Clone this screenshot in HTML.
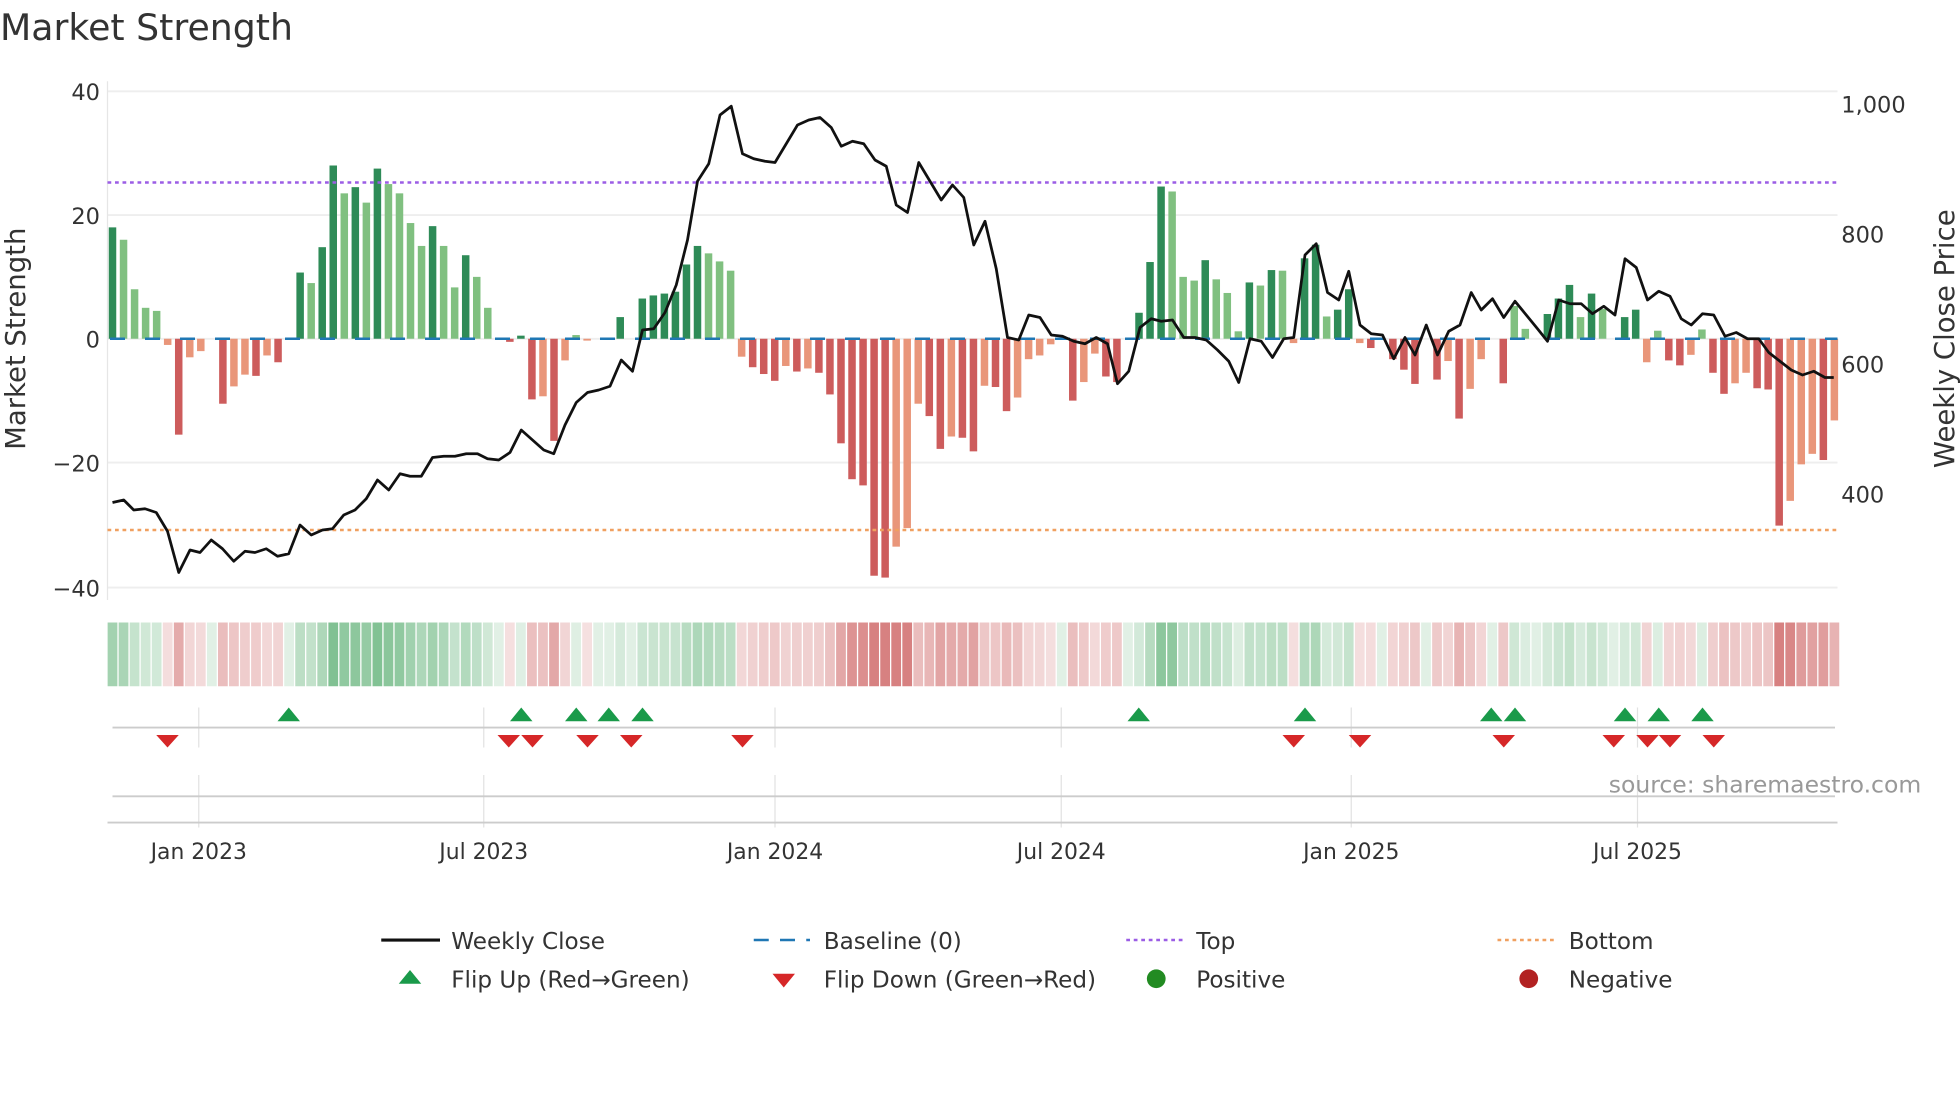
<!DOCTYPE html>
<html><head><meta charset="utf-8"><style>
html,body{margin:0;padding:0;background:#fff;width:1960px;height:1102px;overflow:hidden}
svg text{font-family:"DejaVu Sans","Liberation Sans",sans-serif;fill:#333}
</style></head><body>
<svg id="s" width="1960" height="1102" viewBox="0 0 1568 881.6" xmlns="http://www.w3.org/2000/svg">
<text x="0" y="32" font-size="29">Market Strength</text>
<g id="grid"></g>
<line x1="86" y1="65" x2="86" y2="480" stroke="#e6e6e6" stroke-width="1"/>
<g font-size="18" text-anchor="end">
<text x="80" y="80">40</text><text x="80" y="179">20</text><text x="80" y="278">0</text><text x="80" y="377">−20</text><text x="80" y="477">−40</text>
</g>
<g font-size="18">
<text x="1473" y="90">1,000</text><text x="1473" y="194">800</text><text x="1473" y="298">600</text><text x="1473" y="402">400</text>
</g>
<text transform="translate(20,271) rotate(-90)" font-size="22" text-anchor="middle">Market Strength</text>
<text transform="translate(1563,271) rotate(-90)" font-size="22" text-anchor="middle">Weekly Close Price</text>
<g id="bars"></g>
<line x1="86" y1="146" x2="1470" y2="146" stroke="#9b5de5" stroke-width="2" stroke-dasharray="3 3"/>
<line x1="86" y1="424" x2="1470" y2="424" stroke="#f0a060" stroke-width="2" stroke-dasharray="3 3"/>
<g id="line"></g>
<g id="heat"></g>
<g id="mk"></g>
<line x1="90" y1="582" x2="1468" y2="582" stroke="#ccc" stroke-width="1.5"/>
<line x1="90" y1="637" x2="1468" y2="637" stroke="#ccc" stroke-width="1.5"/>
<line x1="86" y1="658" x2="1470" y2="658" stroke="#ccc" stroke-width="1.5"/>
<text x="1537" y="634" font-size="18.8" text-anchor="end" style="fill:#999">source: sharemaestro.com</text>
<g font-size="17.5" text-anchor="middle">
<text x="159" y="687">Jan 2023</text><text x="387" y="687">Jul 2023</text><text x="620" y="687">Jan 2024</text><text x="849" y="687">Jul 2024</text><text x="1081" y="687">Jan 2025</text><text x="1310" y="687">Jul 2025</text>
</g>
<g font-size="18.5">
<line x1="305" y1="752" x2="352" y2="752" stroke="#111" stroke-width="2.5"/>
<text x="361" y="759">Weekly Close</text>
<line x1="603" y1="752" x2="648" y2="752" stroke="#1f77b4" stroke-width="2" stroke-dasharray="12 9"/>
<text x="659" y="759">Baseline (0)</text>
<line x1="901" y1="752" x2="946" y2="752" stroke="#9b5de5" stroke-width="2" stroke-dasharray="3 3"/>
<text x="957" y="759">Top</text>
<line x1="1198" y1="752" x2="1244" y2="752" stroke="#f0a060" stroke-width="2" stroke-dasharray="3 3"/>
<text x="1255" y="759">Bottom</text>
<polygon points="319,787 337,787 328,776" fill="#1a9a4a"/>
<text x="361" y="790">Flip Up (Red→Green)</text>
<polygon points="618,779 636,779 627,790" fill="#d62728"/>
<text x="659" y="790">Flip Down (Green→Red)</text>
<circle cx="925" cy="783" r="7.5" fill="#228b22"/>
<text x="957" y="790">Positive</text>
<circle cx="1223" cy="783" r="7.5" fill="#b22222"/>
<text x="1255" y="790">Negative</text>
</g>
</svg>
<script>
var NS="http://www.w3.org/2000/svg";
function el(p,t,a){var e=document.createElementNS(NS,t);for(var k in a)e.setAttribute(k,a[k]);document.getElementById(p).appendChild(e);return e;}
var v=[18,16,8,5,4.5,-1,-15.5,-3,-2,0,-10.5,-7.7,-5.8,-6,-2.7,-3.8,0,10.7,9,14.8,28,23.5,24.5,22,27.5,25,23.5,18.7,15,18.2,15,8.3,13.5,10,5,0,-0.5,0.5,-9.8,-9.3,-16.5,-3.5,0.6,-0.3,0,0,3.5,0,6.5,7,7.3,7.6,12,15,13.8,12.5,11,-2.9,-4.6,-5.7,-6.8,-4.4,-5.3,-4.8,-5.5,-9,-16.9,-22.7,-23.7,-38.3,-38.6,-33.6,-30.6,-10.5,-12.5,-17.8,-15.8,-16,-18.2,
-7.6,-7.8,-11.7,-9.5,-3.3,-2.7,-0.9,0,-10,-7,-2.4,-6.1,-7,0,4.2,12.4,24.6,23.8,10,9.4,12.7,9.6,7.4,1.2,9.1,8.6,11.1,11,-0.7,13,15.2,3.6,4.7,8,-0.7,-1.5,0,-3.3,-5,-7.3,0,-6.6,-3.6,-12.9,-8.1,-3.3,0,-7.2,5.3,1.6,0,4,6.5,8.7,3.5,7.3,4.8,0,3.5,4.7,-3.8,1.3,-3.5,-4.3,-2.6,1.5,-5.5,-8.9,-7.2,-5.5,-8,-8.2,-30.2,-26.2,-20.3,-18.6,-19.6,-13.2];
var n=v.length,x0=90,dx=(1467.5-90)/(n-1);
[73,172,271,370,470].forEach(function(y){el("grid","line",{x1:86,y1:y,x2:1470,y2:y,stroke:"#eeeeee","stroke-width":1.5});});
[159,387,620,849,1081,1310].forEach(function(x){el("grid","line",{x1:x,y1:566,x2:x,y2:598,stroke:"#e2e2e2","stroke-width":1});el("grid","line",{x1:x,y1:620,x2:x,y2:662,stroke:"#e2e2e2","stroke-width":1});});
var prev=0;
for(var i=0;i<n;i++){
 var x=x0+i*dx,val=v[i],inc=Math.abs(val)>=Math.abs(prev);prev=val;
 var c=val>=0?(inc?"#2e8b57":"#80c080"):(inc?"#cd5c5c":"#e9967a");
 if(Math.abs(val)>0.05){var h=Math.abs(val)*4.95;el("bars","rect",{x:x-3,y:val>0?271-h:271,width:6,height:h,fill:c});}
 var a=Math.min(Math.abs(val)/28,1),r,g,b,t=0.17+0.55*a;
 if(val>=0){r=255+(80-255)*t;g=255+(170-255)*t;b=255+(105-255)*t;}
 else{r=255+(200-255)*t;g=255+(80-255)*t;b=255+(80-255)*t;}
 el("heat","rect",{x:x-3.9,y:498,width:7.8,height:51,fill:"rgb("+(r|0)+","+(g|0)+","+(b|0)+")"});
}
el("bars","line",{x1:88,y1:271,x2:1470,y2:271,stroke:"#1f77b4","stroke-width":2,"stroke-dasharray":"12 16"});
var p=[[90,402],[99,400],[107,408],[116,407],[125,410],[134,425],[143,458],[152,440],[160,442],[169,432],[178,439],[187,449],[196,441],[204,442],[213,439],[222,445],[231,443],[240,420],[249,428],[258,424],[266,423],[275,412],[284,408],[293,399],[302,384],[311,392],[320,379],[328,381],[337,381],[346,366],[355,365],[364,365],[373,363],[382,363],[390,367],[399,368],[408,362],[417,344],[426,352],[435,360],[443,363],[452,340],[461,322],[470,314],[479,312],[488,309],[497,288],[506,297],[514,264],[523,263],[532,250],[541,228],[550,192],[558,145],[567,131],[576,92],[585,85],[594,123],[603,127],[612,129],[620,130],[629,115],[638,100],[647,96],[656,94],[665,102],[673,117],[682,113],[691,115],[700,128],[709,133],[717,164],[726,170],[735,130],[744,145],[753,160],[762,148],[771,158],[779,196],[788,177],[797,215],[806,270],[815,272],[823,252],[832,254],[841,268],[850,269],[859,273],[868,275],[877,270],[886,275],[894,307],[903,297],[912,262],[921,255],[929,257],[938,256],[947,270],[956,270],[965,272],[974,280],[983,289],[991,306],[1000,271],[1009,273],[1018,286],[1027,271],[1035,270],[1044,204],[1053,195],[1062,234],[1071,240],[1079,217],[1088,260],[1097,267],[1106,268],[1115,287],[1124,270],[1132,284],[1141,260],[1150,284],[1159,265],[1168,260],[1177,234],[1185,248],[1194,239],[1203,254],[1212,241],[1221,252],[1230,263],[1238,273],[1247,240],[1256,243],[1265,243],[1274,251],[1283,245],[1292,252],[1300,207],[1309,214],[1318,240],[1327,233],[1336,237],[1345,255],[1353,260],[1362,251],[1371,252],[1380,269],[1389,266],[1398,271],[1407,271],[1415,282],[1424,289],[1433,296],[1442,300],[1451,297],[1460,302],[1467,302]];
el("line","polyline",{points:p.map(function(q){return q.join(",")}).join(" "),fill:"none",stroke:"#111","stroke-width":2.2,"stroke-linejoin":"round"});
[231,417,461,487,514,911,1044,1193,1212,1300,1327,1362].forEach(function(x){el("mk","polygon",{points:(x-9)+",577 "+(x+9)+",577 "+x+",566",fill:"#1a9a4a"});});
[134,407,426,470,505,594,1035,1088,1203,1291,1318,1336,1371].forEach(function(x){el("mk","polygon",{points:(x-9)+",588 "+(x+9)+",588 "+x+",598",fill:"#d62728"});});
</script>
</body></html>
